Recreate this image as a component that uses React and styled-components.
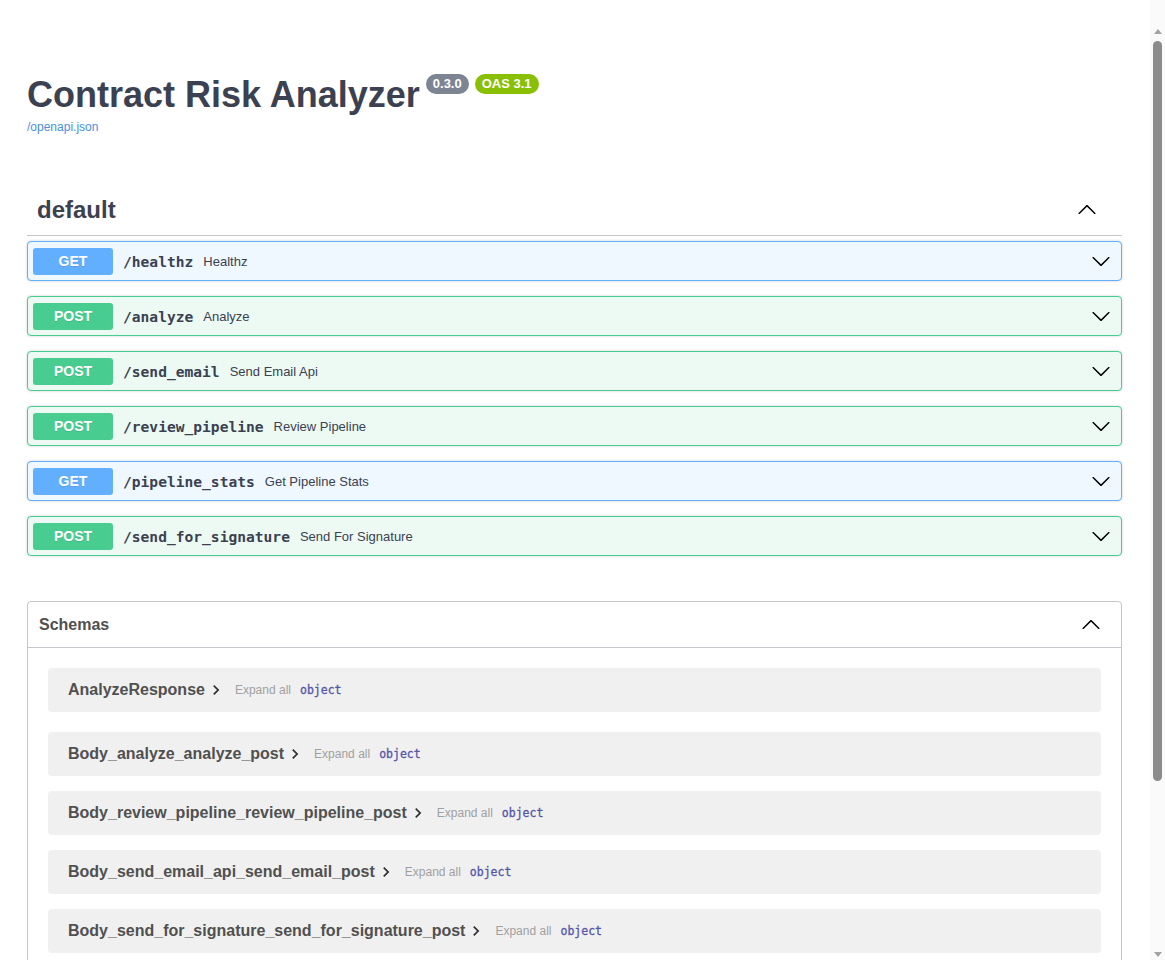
import React from 'react';
import styled, {createGlobalStyle} from 'styled-components';

const GlobalStyle = createGlobalStyle`
  body {
    margin: 8px 23px 8px 7px;
    background: #fff;
    font-family: "Liberation Sans", Arial, sans-serif;
    color: #3b4151;
  }
`

// stand-in for the browser scrollbar seen in the screenshot
const ScrollTrack = styled.div`
  position: fixed;
  top: 0;
  right: 0;
  width: 15px;
  height: 100vh;
  display: flex;
  flex-direction: column;
  align-items: center;
  background: #fafafa;
`

const ScrollButton = styled.div`
  width: 0;
  height: 0;
  margin: ${p => (p.$down ? 'auto 0 3px' : '29px 0 0')};
  border-left: 4.5px solid transparent;
  border-right: 4.5px solid transparent;
  ${p => (p.$down ? 'border-top' : 'border-bottom')}: 5px solid #a3a3a3;
`

const ScrollThumb = styled.div`
  width: 9px;
  height: 740px;
  margin-top: 7px;
  border-radius: 5px;
  background: #8b8b8b;
`

const Wrapper = styled.div`
  padding: 66px 20px 70px;
`

const Info = styled.div`
  margin: 0 0 50px;
`

const TitleRow = styled.div`
  display: flex;
  align-items: flex-start;
`

const Title = styled.h2`
  margin: 0;
  font-size: 36px;
  font-weight: 700;
  line-height: 41px;
  color: #3b4151;
`

const Badge = styled.span`
  margin: 0 0 0 6px;
  padding: 2px 7px;
  border-radius: 57px;
  background: ${p => p.$color};
  color: #fff;
  font-size: 13px;
  font-weight: 700;
  line-height: 16px;
`

const SpecLink = styled.a`
  display: inline-block;
  margin-top: 5px;
  font-size: 12px;
  color: #4990e2;
  text-decoration: none;
`

const TagHeader = styled.div`
  display: flex;
  align-items: center;
  justify-content: space-between;
  height: 50px;
  padding: 0 25px 0 10px;
  border-bottom: 1px solid rgba(59, 65, 81, 0.3);
  margin-bottom: 5px;
`

const TagName = styled.h3`
  margin: 0;
  font-size: 24px;
  font-weight: 700;
  color: #3b4151;
`

const Opblock = styled.div`
  display: flex;
  align-items: center;
  height: 38px;
  padding: 0 10px 0 5px;
  margin-bottom: 15px;
  border: 1px solid ${p => p.$border};
  border-radius: 4px;
  background: ${p => p.$bg};
  box-shadow: 0 0 3px rgba(0, 0, 0, 0.19);
`

const Method = styled.span`
  display: flex;
  align-items: center;
  justify-content: center;
  width: 80px;
  height: 27px;
  border-radius: 3px;
  background: ${p => p.$color};
  color: #fff;
  font-size: 14px;
  font-weight: 700;
  text-shadow: 0 1px 0 rgba(0, 0, 0, 0.1);
`

const Path = styled.span`
  padding: 0 10px;
  font-family: "DejaVu Sans Mono", monospace;
  font-size: 14.6px;
  font-weight: 700;
  color: #3b4151;
`

const Summary = styled.span`
  flex: 1;
  font-size: 13px;
  color: #3b4151;
`

const Arrow = styled.svg`
  width: 20px;
  height: 20px;
  flex: none;
  transform: ${p => (p.$up ? 'rotate(180deg)' : 'none')};
`

const Models = styled.section`
  margin: 45px 0 30px;
  border: 1px solid rgba(59, 65, 81, 0.3);
  border-radius: 4px;
`

const ModelsHeader = styled.div`
  display: flex;
  align-items: center;
  justify-content: space-between;
  height: 45px;
  padding: 0 20px 0 11px;
  border-bottom: 1px solid rgba(59, 65, 81, 0.3);
`

const ModelsTitle = styled.h4`
  margin: 0;
  font-size: 16px;
  font-weight: 700;
  color: #505050;
`

const ModelList = styled.div`
  padding: 20px 20px 1px;
`

const ModelBox = styled.div`
  display: flex;
  align-items: center;
  height: 44px;
  padding: 0 20px;
  margin-bottom: 15px;
  border-radius: 4px;
  background: #f0f0f0;

  &:first-child {
    margin-bottom: 20px;
  }
`

const ModelName = styled.span`
  font-size: 16px;
  font-weight: 700;
  color: #505050;
`

const ModelToggle = styled.svg`
  width: 20px;
  height: 20px;
  margin: 0 9px 0 1px;
`

const ExpandAll = styled.span`
  margin-right: 9px;
  font-size: 12px;
  color: #a0a0a0;
`

const TypeName = styled.span`
  font-family: "DejaVu Sans Mono", monospace;
  font-size: 11.5px;
  color: #55a;
  -webkit-text-stroke: 0.3px #55a;
`

const methods = {
  GET: {color: '#61affe', bg: '#eff7ff'},
  POST: {color: '#49cc90', bg: '#edfaf4'}
}

const ops = [
  ['GET', '/healthz', 'Healthz'],
  ['POST', '/analyze', 'Analyze'],
  ['POST', '/send_email', 'Send Email Api'],
  ['POST', '/review_pipeline', 'Review Pipeline'],
  ['GET', '/pipeline_stats', 'Get Pipeline Stats'],
  ['POST', '/send_for_signature', 'Send For Signature']
]

const schemas = [
  'AnalyzeResponse',
  'Body_analyze_analyze_post',
  'Body_review_pipeline_review_pipeline_post',
  'Body_send_email_api_send_email_post',
  'Body_send_for_signature_send_for_signature_post',
  'HTTPValidationError',
  'ValidationError'
]

const Chevron = ({up}) => (
  <Arrow $up={up} viewBox="0 0 20 20">
    <path
      fill="#000"
      d="M17.418 6.109c.272-.268.709-.268.979 0s.271.701 0 .969l-7.908 7.83c-.27.268-.707.268-.979 0l-7.908-7.830c-.27-.268-.27-.701 0-.969.271-.268.709-.268.979 0L10 13.25l7.418-7.141z"
    />
  </Arrow>
)

export default function App () {
  return (
    <Wrapper>
      <GlobalStyle />
      <Info>
        <TitleRow>
          <Title>Contract Risk Analyzer</Title>
          <Badge $color="#7d8492">0.3.0</Badge>
          <Badge $color="#89bf04">OAS 3.1</Badge>
        </TitleRow>
        <SpecLink href="#">/openapi.json</SpecLink>
      </Info>

      <TagHeader>
        <TagName>default</TagName>
        <Chevron up />
      </TagHeader>

      {ops.map(([method, path, summary]) => (
        <Opblock key={path} $border={methods[method].color} $bg={methods[method].bg}>
          <Method $color={methods[method].color}>{method}</Method>
          <Path>{path}</Path>
          <Summary>{summary}</Summary>
          <Chevron />
        </Opblock>
      ))}

      <Models>
        <ModelsHeader>
          <ModelsTitle>Schemas</ModelsTitle>
          <Chevron up />
        </ModelsHeader>
        <ModelList>
          {schemas.map(name => (
            <ModelBox key={name}>
              <ModelName>{name}</ModelName>
              <ModelToggle viewBox="0 0 24 24">
                <path fill="#303030" d="M10 6L8.59 7.41 13.17 12l-4.58 4.59L10 18l6-6z" />
              </ModelToggle>
              <ExpandAll>Expand all</ExpandAll>
              <TypeName>object</TypeName>
            </ModelBox>
          ))}
        </ModelList>
      </Models>

      <ScrollTrack>
        <ScrollButton />
        <ScrollThumb />
        <ScrollButton $down />
      </ScrollTrack>
    </Wrapper>
  );
}
